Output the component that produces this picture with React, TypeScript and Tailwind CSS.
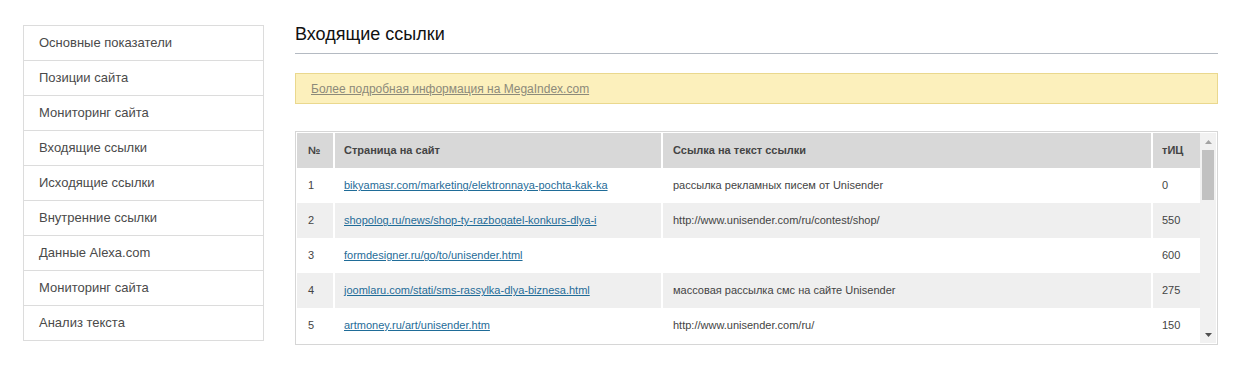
import React from "react";

const menu = [
  "Основные показатели",
  "Позиции сайта",
  "Мониторинг сайта",
  "Входящие ссылки",
  "Исходящие ссылки",
  "Внутренние ссылки",
  "Данные Alexa.com",
  "Мониторинг сайта",
  "Анализ текста",
];

const rows = [
  ["1", "bikyamasr.com/marketing/elektronnaya-pochta-kak-ka", "рассылка рекламных писем от Unisender", "0"],
  ["2", "shopolog.ru/news/shop-ty-razbogatel-konkurs-dlya-i", "http://www.unisender.com/ru/contest/shop/", "550"],
  ["3", "formdesigner.ru/go/to/unisender.html", "", "600"],
  ["4", "joomlaru.com/stati/sms-rassylka-dlya-biznesa.html", "массовая рассылка смс на сайте Unisender", "275"],
  ["5", "artmoney.ru/art/unisender.htm", "http://www.unisender.com/ru/", "150"],
];

export default function App() {
  return (
    <div
      className="w-[1241px] h-[374px] bg-white flex items-start pl-[23px] pt-[25px] gap-[31px]"
      style={{ fontFamily: '"Liberation Sans", Arial, sans-serif' }}
    >
      <div className="w-[241px] border border-[#dcdcdc] flex flex-col">
        {menu.map((m, i) => (
          <div
            key={i}
            className={`flex items-center pl-[15px] text-[13px] text-[#4a4a4a] ${i < menu.length - 1 ? "h-[35px] border-b border-[#dcdcdc]" : "h-[34px]"}`}
          >
            {m}
          </div>
        ))}
      </div>

      <div className="w-[923px] flex flex-col pt-[0px]">
        <div className="text-[18px] leading-[20px] text-[#111] pb-[9px] border-b border-[#b4bac2] -mt-px">
          Входящие ссылки
        </div>
        <div className="mt-[19px] h-[31px] bg-[#fcf0bc] border border-[#ead88e] flex items-center pl-[15px]">
          <a className="text-[12px] text-[#8c8a7a] underline">Более подробная информация на MegaIndex.com</a>
        </div>

        <div className="mt-[27px] border border-[#d6d6d6] p-px flex">
          <div className="w-[903px] flex flex-col">
            <div className="h-[35px] flex gap-[2px] bg-white text-[11px] font-bold text-[#444]">
              <div className="w-[36px] bg-[#d8d8d8] flex items-center pl-[11px]">№</div>
              <div className="w-[326px] bg-[#d8d8d8] flex items-center pl-[9px]">Страница на сайт</div>
              <div className="w-[488px] bg-[#d8d8d8] flex items-center pl-[10px]">Ссылка на текст ссылки</div>
              <div className="w-[47px] bg-[#d8d8d8] flex items-center pl-[9px]">тИЦ</div>
            </div>
            {rows.map((r, i) => {
              const bg = i % 2 === 1 ? "bg-[#efefef]" : "bg-white";
              return (
                <div key={i} className="h-[35px] flex gap-[2px] bg-white text-[11px] text-[#444]">
                  <div className={`w-[36px] ${bg} flex items-center pl-[11px]`}>{r[0]}</div>
                  <div className={`w-[326px] ${bg} flex items-center pl-[9px]`}>
                    <a className="text-[#1f6c98] underline">{r[1]}</a>
                  </div>
                  <div className={`w-[488px] ${bg} flex items-center pl-[10px]`}>{r[2]}</div>
                  <div className={`w-[47px] ${bg} flex items-center pl-[9px]`}>{r[3]}</div>
                </div>
              );
            })}
          </div>
          <div className="w-[17px] bg-[#f1f1f1] flex flex-col items-center">
            <div className="h-[17px] flex items-center justify-center">
              <svg width="7" height="4" viewBox="0 0 7 4">
                <polygon points="3.5,0 7,4 0,4" fill="#a3a3a3" />
              </svg>
            </div>
            <div className="w-[12px] h-[50px] bg-[#c1c1c1]" />
            <div className="flex-1" />
            <div className="h-[17px] flex items-center justify-center">
              <svg width="7" height="4" viewBox="0 0 7 4">
                <polygon points="0,0 7,0 3.5,4" fill="#505050" />
              </svg>
            </div>
          </div>
        </div>
      </div>
    </div>
  );
}
